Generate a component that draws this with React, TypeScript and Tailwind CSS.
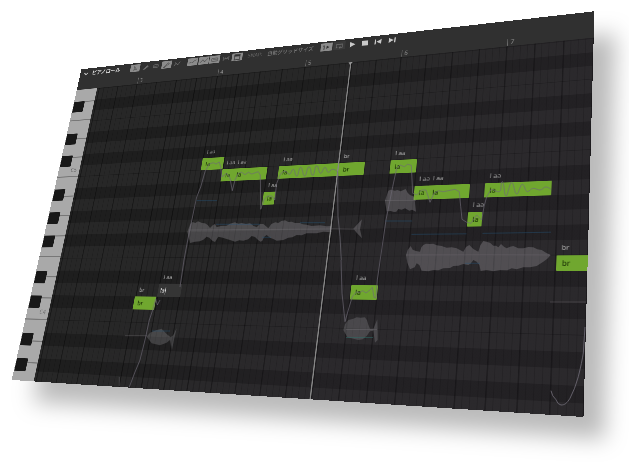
import React from "react";

type Note = { x: number; w: number; row: number; lyric: string; phoneme: string; editing?: boolean };

// Rows count semitones downward from G5; each row is 22px tall.
const notes: Note[] = [
  { x: 208, w: 40, row: 18, lyric: "br", phoneme: "br" },
  { x: 249, w: 42, row: 17, lyric: "la", phoneme: "l aa", editing: true },
  { x: 289, w: 40, row: 7, lyric: "la", phoneme: "l aa" },
  { x: 329, w: 20, row: 8, lyric: "la", phoneme: "l aa" },
  { x: 349, w: 60, row: 8, lyric: "la", phoneme: "l aa" },
  { x: 409, w: 20, row: 10, lyric: "la", phoneme: "l aa" },
  { x: 429, w: 100, row: 8, lyric: "la", phoneme: "l aa" },
  { x: 529, w: 41, row: 8, lyric: "br", phoneme: "br" },
  { x: 570, w: 40, row: 17, lyric: "la", phoneme: "l aa" },
  { x: 610, w: 40, row: 8, lyric: "la", phoneme: "l aa" },
  { x: 650, w: 20, row: 10, lyric: "la", phoneme: "l aa" },
  { x: 670, w: 60, row: 10, lyric: "la", phoneme: "l aa" },
  { x: 730, w: 20, row: 12, lyric: "la", phoneme: "l aa" },
  { x: 751, w: 90, row: 10, lyric: "la", phoneme: "l aa" },
  { x: 851, w: 44, row: 15, lyric: "br", phoneme: "br" },
];

const pitches = "G F# F E D# D C# C B A# A G# G F# F E D# D C# C B A# A G# G".split(" ");
const whites = ["", "", "", "", "C5", "", "", "", "", "", "", "C4", "", ""];

function Tool({ on, children }: { on?: boolean; children: React.ReactNode }) {
  return (
    <span
      className={
        on
          ? "flex h-[15px] w-5 shrink-0 items-center justify-center rounded-[1px] bg-[#8b8b8b] text-[#555]"
          : "flex h-[15px] w-5 shrink-0 items-center justify-center text-[#6c6c6c]"
      }
    >
      <svg viewBox="0 0 16 12" className="h-3 w-4" fill="none" stroke="currentColor" strokeWidth="1.3">
        {children}
      </svg>
    </span>
  );
}

function Toolbar() {
  return (
    <div className="flex h-[21px] shrink-0 items-center whitespace-nowrap pl-2">
      <svg viewBox="0 0 10 8" className="h-2 w-[10px] shrink-0" fill="none" stroke="#ccc" strokeWidth="1.8">
        <path d="M1 2 5 6 9 2" />
      </svg>
      <span className="ml-2 w-[62px] shrink-0 font-['Noto_Sans_CJK_JP',sans-serif] text-[10.4px] font-bold leading-none text-[#e4e4e4]">ピアノロール</span>
      <div className="ml-[21px] flex gap-[1.5px]">
        <Tool on><path d="M6 2v8l2-2 3 0z" /></Tool>
        <Tool><path d="M4 10 11 3l2 2-7 5z" fill="currentColor" /></Tool>
        <Tool><rect x="3" y="3" width="10" height="6" rx="3" /><path d="M5 6h6" /></Tool>
        <Tool on><path d="m3 10 8-8 2 2-8 6zM1 11h5" /></Tool>
        <Tool><path d="m2 10 4-5 4 3 4-6M4 3l2 2" /></Tool>
      </div>
      <div className="ml-[11px] flex gap-[1.5px]">
        <Tool on><path d="M1 8c3-4 5 2 8-2s4-2 6-4" /></Tool>
        <Tool on><path d="m1 9 5-5 4 4 5-6" /></Tool>
        <Tool on><rect x="2" y="3" width="12" height="6" rx="2" /><path d="M4 6h8" /></Tool>
        <Tool><path d="M3 2v8M13 2v8M5 6h6M6 4v4M10 4v4" /></Tool>
        <Tool on><path d="M3 1h10v10H3z" stroke="#333" /><path d="M3 3h10" stroke="#333" strokeWidth="3" /></Tool>
      </div>
      <span className="ml-[10px] w-[27px] shrink-0 text-[9.5px] leading-none text-[#686868]">SNAP:</span>
      <span className="ml-[9px] w-[83px] shrink-0 font-['Noto_Sans_CJK_JP',sans-serif] text-[9.2px] font-medium leading-none text-[#7c7c7c]">自動グリッドサイズ</span>
      <div className="ml-3 flex gap-[1.5px]">
        <Tool on><path d="M2 3h2v7" stroke="#333" /><path d="M8 3v6l5-3z" fill="#333" stroke="none" /></Tool>
        <span className="bg-[#3a3a3a]"><Tool><path d="M5 9H3V3h10v6H8m2-2L8 9l2 2" /></Tool></span>
      </div>
      <svg viewBox="0 0 78 12" className="ml-2 h-3 w-[78px] shrink-0" fill="#c9c9c9">
        <path d="M0 1v10l9-5zM20 1.5h10v9H20zM41 1.5h2v9h-2zM52 1.5v9L44 6zM64 1.5v9l8-4.5zM73 1.5h2v9h-2z" />
      </svg>
    </div>
  );
}

function Ruler() {
  return (
    <div className="flex h-[23px] shrink-0 items-center pl-[130px] pt-2 text-[10px] leading-none text-[#8d8d8d]">
      {[3, 4, 5, 6, 7].map((bar) => (
        <span key={bar} className="flex w-40 shrink-0 items-center gap-[3px]">
          <i className="h-3 w-[1.3px] bg-[#6c6c6c]" />
          {bar}
        </span>
      ))}
    </div>
  );
}

function Keyboard() {
  return (
    <div className="relative h-full w-[45px] shrink-0 overflow-hidden bg-[#a9a9a9]">
      <div className="-mt-[10.6px] flex flex-col">
        {whites.map((label, i) => (
          <div
            key={i}
            className="flex h-[37.714px] shrink-0 items-end justify-end border-b-2 border-[#777] pb-[6px] pr-[6px] text-[10.5px] leading-none text-[#666]"
          >
            {label}
          </div>
        ))}
      </div>
      <div className="absolute inset-x-0 top-[3px]">
        {pitches.map((p, i) => (
          <div key={i} className="h-[22px]">
            {p.includes("#") && <div className="ml-px h-full w-[23px] rounded-r-[2px] bg-[#181818]" />}
          </div>
        ))}
      </div>
    </div>
  );
}

function Grid() {
  return (
    <div className="relative h-full flex-1 overflow-hidden bg-[#1f1f1f]">
      <div className="flex flex-col pt-[2px]">
        {pitches.map((p, i) => (
          <div
            key={i}
            className={
              p.includes("#")
                ? "h-[22px] shrink-0 bg-[#1e1e1e]"
                : p === "F" || p === "C"
                  ? "h-[22px] shrink-0 border-b-[1.5px] border-[#1d1d1d] bg-[#272727]"
                  : "h-[22px] shrink-0 bg-[#272727]"
            }
          />
        ))}
      </div>
      <div className="absolute inset-0 bg-[repeating-linear-gradient(90deg,rgba(0,0,0,.17)_0_1.5px,transparent_1.5px_10px)] bg-[position:4px_0]" />
      <div className="absolute inset-0 left-[4px] bg-[repeating-linear-gradient(90deg,rgba(0,0,0,.28)_0_1.9px,transparent_1.9px_40px)]" />
      <div className="absolute inset-0 bg-[linear-gradient(125deg,transparent_35%,rgba(80,60,92,.09)_70%)]" />
      {notes.map((n, i) => (
        <React.Fragment key={i}>
          <span
            className="absolute whitespace-pre text-[9.5px] leading-[22px] text-[#adadad]"
            style={{ left: n.x - 45 + 6, top: 2 + (n.row - 1) * 22 }}
          >
            {n.phoneme}
          </span>
          <div
            className={
              n.editing
                ? "absolute h-[22px] bg-[#353535] pl-[4px] text-[10px] leading-[22px] text-[#e2e2e2]"
                : "absolute h-[22px] rounded-[1px] bg-[#70a72f] pl-[7px] text-[10px] font-medium leading-[22px] text-[#203a08]"
            }
            style={{ left: n.x - 45, top: 2 + n.row * 22, width: n.w }}
          >
            {n.lyric}
            {n.editing && <i className="ml-px inline-block h-3 w-px bg-[#ddd] align-middle" />}
          </div>
        </React.Fragment>
      ))}
      <div className="absolute bottom-0 left-[482px] top-0 w-[1.5px] bg-[#858585]" />
      <div className="absolute left-[479px] top-0 h-[5px] w-[7px] bg-[#999] [clip-path:polygon(0_0,100%_0,50%_100%)]" />
    </div>
  );
}

// Pitch curves, amplitude shapes and range markers drawn over the roll.
function Curves() {
  return (
    <svg viewBox="0 0 629 474" className="pointer-events-none absolute inset-0 h-[474px] w-[629px]" fill="none">
      <g fill="#a9a7ac" fillOpacity=".3">
        <path transform="translate(180 140) scale(.33333)" d="M22 275 31 252 38 246 46 249 54 244 66 249 75 250 84 256 90 264 99 255 105 252 110 262 122 258 140 257 150 251 165 247 175 251 185 249 198 252 210 250 220 257 230 262 240 252 250 252 258 259 265 265 274 252 286 247 295 249 304 243 315 241 325 246 335 245 345 249 360 249 368 253 380 254 395 258 420 256 440 259 455 258V277L430 275 410 280 380 280 365 286 350 285 337 292 325 293 310 300 290 302 280 297 270 293 260 285 253 290 247 302 242 305 235 301 225 291 215 288 205 298 190 302 178 301 165 305 150 300 140 297 128 293 115 290 105 306 97 302 88 293 80 290 70 299 60 304 45 305 30 309 26 292ZM520 266 535 250 546 238 540 268 546 295 530 278Z" />
        <path transform="translate(370 140) scale(.33333)" d="M45 182 55 152 62 149 75 152 82 150 92 154 107 147 113 158 120 165 133 170 138 215 126 209 118 212 105 205 95 209 85 207 79 215 72 216 62 213 50 214ZM108 345 113 330 122 318 128 329 138 333 150 335 154 322 160 315 168 311 180 312 190 311 200 316 215 318 230 323 245 322 260 325 270 330 280 335 288 321 298 315 310 327 325 335 331 316 340 303 360 308 370 317 378 317 385 322 393 312 402 320 410 325 420 320 430 318 445 325 460 325 475 321 490 322 502 328 515 330 528 338 542 345 532 356 520 365 500 378 480 382 460 382 440 388 425 385 412 391 390 390 370 394 350 390 332 393 328 375 320 365 310 360 303 370 295 375 280 372 265 377 250 378 240 384 220 385 205 391 190 390 175 394 155 392 148 375 140 370 134 382 120 388 112 368Z" />
        <path transform="translate(110 260) scale(.33333)" d="M110 230 120 218 140 210 155 206 170 222 182 232 190 225 200 205 193 235 186 270 180 240 170 248 150 256 125 250Z" fillOpacity=".25" />
        <path transform="translate(290 260) scale(.33333)" d="M160 210 165 193 175 180 190 176 200 172 212 173 225 172 231 181 235 194 240 206 250 206 262 178 263 210 263 240 255 248 250 212 240 214 230 228 218 238 205 240 190 236 172 232Z" fillOpacity=".25" />
      </g>
      <path stroke="#245a80" strokeOpacity=".45" strokeWidth=".9" d="M196.6 200.6h20.4M385 221h27M411.5 234.4l55-.6M482.5 233.4l68.5-1.2M216 224.3h44M300 222.7h25M262 237.3h9M465 263.3h15M152 331h18" />
      <path stroke="#2f6b66" strokeOpacity=".6" strokeWidth=".9" d="M346 337.5h27" />
      <path stroke="#77757a" strokeOpacity=".5" strokeWidth=".7" d="M125 335.7h22M550 302h36M119.3 377v9M331 228.8l23 .4M189 230l142-1M406 255h144M346 329.5h31M385 200.5h31" />
      <g stroke="#6f6b76" strokeOpacity=".78" strokeWidth=".85" strokeLinejoin="round">
        <path d="M129.3 387 135 372 140 360 145.7 337 149.3 320 152.7 310 155.7 299 157.3 305 160 300M180 287 184 260 188.3 237 196.7 197 200.7 187 205 171.7 209.3 164 213.3 162.7 216 164 219.3 162 220.7 167 221.7 177 226.7 173.3 230 178 232.3 190.7 235 180 238.3 173.3 241.7 172.3 245 174.7 248.3 172.3 251.7 174 258.3 171.7 260.3 175 260.7 209.3 264 200 267.3 196 271.7 196 274.7 200 276.7 183.3 280 175" />
        <path transform="translate(180 140) scale(.33333)" strokeWidth="2.7" d="M300 105Q307 93 315 93C322 93 322 103 328 103S334 88 340 88 344 108 350 108 356 82 362 82 368 108 374 108 381 80 387 80 392 106 398 106 404 77 410 77 416 100 422 100 429 82 435 82 439 97 445 97 450 88 457 88 470 90 474 100L473 150 474 230 480 290 484 360" />
        <path d="M341 260 342 293.3 345 321.7 348.3 310 352.3 296.7 356.7 291.7 359.3 292.7 362.7 290.7 366 293 370 290 372.3 287.3 374 297.3 376 298 377.3 280 386 220 392.7 186.7 396.7 168.3 400 165 404.3 166.7 407.7 164.3 411.3 165.3 412.7 193.3 416.7 195 421.7 190 426 190 430 202.3 434 193.3 438.3 190.7 443.3 191.7 448.3 190.7 455 189.3 459.3 191.7 460.7 206.7 462 219.3 466.7 222.3 471 223.3 476.7 215 481.7 220 484 206.7 486.7 196.7 490.7 190" />
        <path transform="translate(370 140) scale(.33333)" strokeWidth="2.7" d="M362 150C370 145 380 158 388 155S391 125 397 125 402 168 408 168 418 127 425 127 433 162 440 162 450 133 457 133 465 155 472 155 482 145 490 145 502 150 510 150 520 141 527 141 537 144 543 148" />
        <path strokeOpacity="1" d="M551 390.7 552.7 395.7 555.7 399.3Q558 405 561 405C565 405 567 403 570 398.3Q575 389 578.3 376.7 582 362 583.3 353L585 327" />
      </g>
    </svg>
  );
}

export default function App() {
  return (
    <div className="relative h-[474px] w-[629px] overflow-hidden bg-white font-['Noto_Sans','Noto_Sans_CJK_JP',sans-serif]">
      <div className="h-[474px] w-[629px] [filter:drop-shadow(21px_22px_11px_rgba(0,0,0,.27))]">
        <div className="flex h-[591px] w-[890px] origin-top-left flex-col overflow-hidden bg-[#303030] [transform:matrix3d(0.426539,-0.068022,0,-0.00025213,-0.120051,0.456853,0,-0.00018122,0,0,1,0,81.4,69.3,0,1)]">
          <Toolbar />
          <Ruler />
          <div className="flex h-[547px] shrink-0">
            <Keyboard />
            <Grid />
          </div>
        </div>
      </div>
      <Curves />
    </div>
  );
}
